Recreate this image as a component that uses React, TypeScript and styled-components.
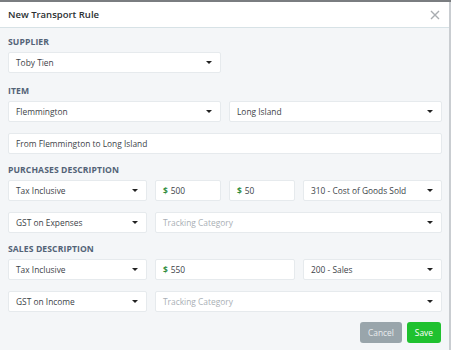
import styled, { createGlobalStyle } from "styled-components";

const GlobalStyle = createGlobalStyle`
  html, body {
    margin: 0;
    padding: 0;
    background: #7a7d80;
  }
  * {
    box-sizing: border-box;
  }
`;

const Modal = styled.div`
  width: 451px;
  height: 348px;
  margin-top: 2px;
  background: #f4f6f8;
  font-family: "Open Sans", "Noto Sans", sans-serif;
  display: flex;
  flex-direction: column;
  border-right: 2px solid #c9cdd1;
`;

const Header = styled.header`
  height: 26px;
  background: #ffffff;
  border-bottom: 1px solid #d7e2e6;
  display: flex;
  align-items: center;
  justify-content: space-between;
  padding: 0 8px 0 8px;
`;

const Title = styled.h1`
  margin: 0;
  font-size: 9.5px;
  font-weight: 600;
  color: #2b2f33;
`;

const Close = styled.button`
  border: none;
  background: none;
  padding: 0;
  width: 12px;
  height: 12px;
  display: flex;
  align-items: center;
  justify-content: center;
  cursor: pointer;
`;

const Body = styled.div`
  flex: 1;
  padding: 6px 7px 0 8px;
  display: flex;
  flex-direction: column;
`;

const Label = styled.div`
  font-size: 8.6px;
  font-weight: 700;
  color: #536377;
  text-transform: uppercase;
  letter-spacing: 0.1px;
  height: 15px;
  display: flex;
  align-items: center;
  margin-bottom: 3px;
`;

const Grid = styled.div<{ $cols: string; $mb?: number }>`
  display: grid;
  grid-template-columns: ${(p) => p.$cols};
  column-gap: 8px;
  row-gap: 11px;
  margin-bottom: ${(p) => p.$mb ?? 8}px;
`;

const Field = styled.div<{ $span?: number }>`
  grid-column: span ${(p) => p.$span ?? 1};
  height: 21px;
  background: #ffffff;
  border: 1px solid #e6eaed;
  border-radius: 2px;
  display: flex;
  align-items: center;
  padding: 0 8px 0 7px;
  font-size: 8.4px;
  color: #3a3f44;
  white-space: nowrap;
  overflow: hidden;
`;

const Value = styled.span<{ $muted?: boolean }>`
  flex: 1;
  color: ${(p) => (p.$muted ? "#a9afb5" : "#3d4348")};
`;

const Dollar = styled.span`
  color: #2f8d3c;
  font-weight: 700;
  margin-right: 3px;
`;

const Caret = styled.span`
  width: 0;
  height: 0;
  border-left: 3px solid transparent;
  border-right: 3px solid transparent;
  border-top: 3px solid #222;
`;

const Footer = styled.div`
  display: flex;
  justify-content: flex-end;
  gap: 5px;
  margin-top: 2px;
  padding-right: 1px;
`;

const Button = styled.button<{ $primary?: boolean }>`
  height: 21px;
  padding: 0 8px;
  border: none;
  border-radius: 3px;
  font-family: inherit;
  font-size: 8.4px;
  color: ${(p) => (p.$primary ? "#ffffff" : "#e9edef")};
  background: ${(p) => (p.$primary ? "#1fc12f" : "#99a5ab")};
`;

function Select({ value, span, muted }: { value: string; span?: number; muted?: boolean }) {
  return (
    <Field $span={span}>
      <Value $muted={muted}>{value}</Value>
      <Caret />
    </Field>
  );
}

function Money({ amount, span }: { amount: string; span?: number }) {
  return (
    <Field $span={span}>
      <Dollar>$</Dollar>
      <Value>{amount}</Value>
    </Field>
  );
}

const ROW = "139px 66px 66px 1fr";

export default function App() {
  return (
    <>
      <GlobalStyle />
      <Modal>
        <Header>
          <Title>New Transport Rule</Title>
          <Close>
            <svg width="10" height="10" viewBox="0 0 10 10">
              <path d="M1 1L9 9M9 1L1 9" stroke="#a9adb1" strokeWidth="1.4" />
            </svg>
          </Close>
        </Header>
        <Body>
          <Label>Supplier</Label>
          <Grid $cols="1fr 1fr" $mb={10}>
            <Select value="Toby Tien" />
          </Grid>

          <Label>Item</Label>
          <Grid $cols="1fr 1fr">
            <Select value="Flemmington" />
            <Select value="Long Island" />
            <Field $span={2}>
              <Value>From Flemmington to Long Island</Value>
            </Field>
          </Grid>

          <Label>Purchases Description</Label>
          <Grid $cols={ROW}>
            <Select value="Tax Inclusive" />
            <Money amount="500" />
            <Money amount="50" />
            <Select value="310 - Cost of Goods Sold" />
            <Select value="GST on Expenses" />
            <Select value="Tracking Category" span={3} muted />
          </Grid>

          <Label>Sales Description</Label>
          <Grid $cols={ROW}>
            <Select value="Tax Inclusive" />
            <Money amount="550" span={2} />
            <Select value="200 - Sales" />
            <Select value="GST on Income" />
            <Select value="Tracking Category" span={3} muted />
          </Grid>

          <Footer>
            <Button>Cancel</Button>
            <Button $primary>Save</Button>
          </Footer>
        </Body>
      </Modal>
    </>
  );
}
